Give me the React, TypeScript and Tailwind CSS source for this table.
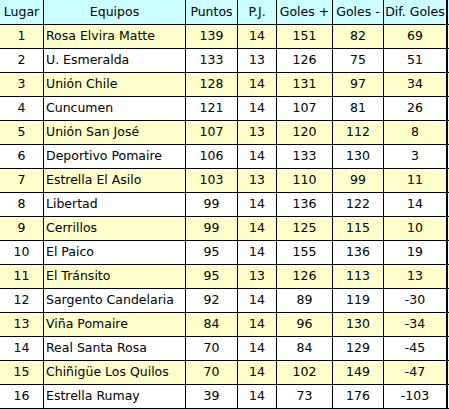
const rows: [number, string, number, number, number, number, number][] = [
  [1, "Rosa Elvira Matte", 139, 14, 151, 82, 69],
  [2, "U. Esmeralda", 133, 13, 126, 75, 51],
  [3, "Unión Chile", 128, 14, 131, 97, 34],
  [4, "Cuncumen", 121, 14, 107, 81, 26],
  [5, "Unión San José", 107, 13, 120, 112, 8],
  [6, "Deportivo Pomaire", 106, 14, 133, 130, 3],
  [7, "Estrella El Asilo", 103, 13, 110, 99, 11],
  [8, "Libertad", 99, 14, 136, 122, 14],
  [9, "Cerrillos", 99, 14, 125, 115, 10],
  [10, "El Paico", 95, 14, 155, 136, 19],
  [11, "El Tránsito", 95, 13, 126, 113, 13],
  [12, "Sargento Candelaria", 92, 14, 89, 119, -30],
  [13, "Viña Pomaire", 84, 14, 96, 130, -34],
  [14, "Real Santa Rosa", 70, 14, 84, 129, -45],
  [15, "Chiñigüe Los Quilos", 70, 14, 102, 149, -47],
  [16, "Estrella Rumay", 39, 14, 73, 176, -103],
];

const widths = ["w-[44px]", "w-[142px]", "w-[52px]", "w-[39px]", "w-[56px]", "w-[51px]", "w-[64px]"];
const headers = ["Lugar", "Equipos", "Puntos", "P.J.", "Goles +", "Goles -", "Dif. Goles"];

function Cell({ i, children, left }: { i: number; children: React.ReactNode; left?: boolean }) {
  const last = i === widths.length - 1;
  return (
    <div
      className={`${widths[i]} shrink-0 h-full flex items-center border-black ${last ? "border-r-2" : "border-r"} ${
        left ? "justify-start pl-[2px]" : "justify-center"
      }`}
    >
      {children}
    </div>
  );
}

export default function App() {
  return (
    <div className="w-[449px] bg-white text-black text-[12.5px]" style={{ fontFamily: '"DejaVu Sans", Verdana, sans-serif' }}>
      <div className="flex h-[25px] border-b border-black bg-[#ccffff]">
        {headers.map((h, i) => (
          <Cell key={h} i={i}>
            {h}
          </Cell>
        ))}
      </div>
      {rows.map((r, idx) => {
        const last = idx === rows.length - 1;
        return (
          <div
            key={r[0]}
            className={`flex border-black ${last ? "h-[25px] border-b-2" : "h-[24px] border-b"} ${
              idx % 2 === 0 ? "bg-[#ffffcc]" : "bg-white"
            }`}
          >
            {r.map((v, i) => (
              <Cell key={i} i={i} left={i === 1}>
                {v}
              </Cell>
            ))}
          </div>
        );
      })}
    </div>
  );
}
